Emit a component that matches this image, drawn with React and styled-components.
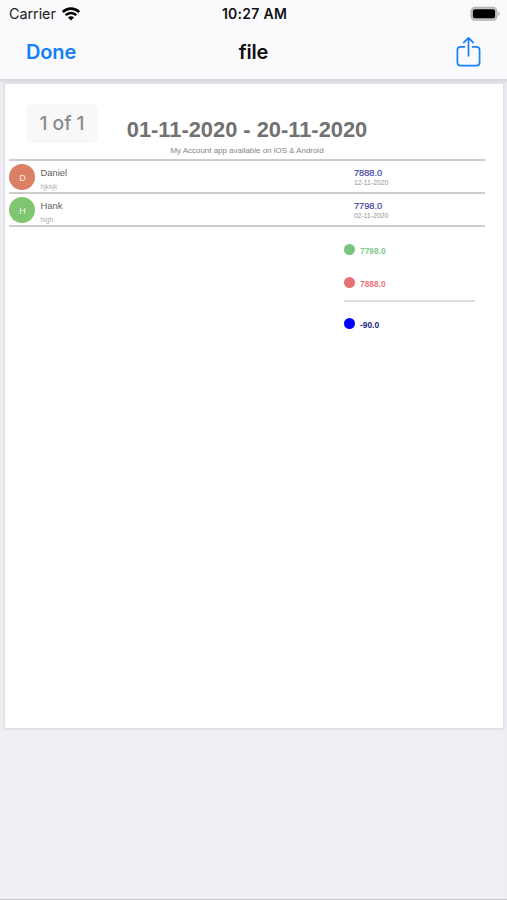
import React from "react";
import styled, { createGlobalStyle } from "styled-components";

const GlobalStyle = createGlobalStyle`
  * { box-sizing: border-box; }
  body { margin: 0; background: #f0eff5; }
`;

const Screen = styled.main`
  display: flex;
  flex-direction: column;
  width: 507px;
  height: 900px;
  overflow: hidden;
  background: #f0eff5;
  border-bottom: 1px solid #c9c9cc;
  font-family: Inter, "Liberation Sans", sans-serif;
`;

const Header = styled.header`
  flex: none;
  height: 79px;
  background: #fafafc;
`;

const StatusBar = styled.div`
  display: grid;
  grid-template-columns: 1fr auto 1fr;
  align-items: center;
  height: 27px;
  padding: 0 7px 0 9px;
  font-size: 14.4px;
  color: #222;
`;

const Carrier = styled.div`
  display: flex;
  align-items: center;
  gap: 6px;
  letter-spacing: -0.05px;
`;

const Clock = styled.time`
  font-weight: 600;
  font-size: 14px;
  letter-spacing: 0.27px;
  color: #111;
`;

const BatterySlot = styled.div`
  display: flex;
  justify-content: flex-end;
`;

const NavBar = styled.nav`
  display: grid;
  grid-template-columns: 1fr auto 1fr;
  align-items: center;
  height: 49px;
  padding: 0 26px;
`;

const DoneButton = styled.button`
  justify-self: start;
  padding: 0;
  border: 0;
  background: none;
  font: 600 20px/24px Inter, sans-serif;
  letter-spacing: -0.15px;
  color: #157efb;
`;

const FileName = styled.h1`
  margin: 0;
  font-size: 20px;
  line-height: 24px;
  font-weight: 600;
  letter-spacing: -0.2px;
  color: #111;
`;

const ShareButton = styled.button`
  justify-self: end;
  display: flex;
  padding: 0;
  border: 0;
  background: none;
`;

const Viewer = styled.div`
  flex: 1;
  padding: 5px 4px 0 5px;
  box-shadow: inset 0 4px 2px -1px #dadade;
`;

const Page = styled.article`
  position: relative;
  height: 644px;
  padding: 33px 18px 0 4px;
  background: #fff;
  box-shadow: 0 0 3px 1px #d6d6da;
  font-family: "Liberation Sans", Arial, sans-serif;
`;

const PageBadge = styled.div`
  position: absolute;
  left: 21px;
  top: 20px;
  width: 72px;
  height: 39px;
  border-radius: 6px;
  background: #f8f8f8;
  font: 500 19.3px/38px Inter, sans-serif;
  text-align: center;
  color: #8b8b8b;
`;

const ReportTitle = styled.h2`
  margin: 0;
  font-size: 21.85px;
  line-height: 26px;
  font-weight: 700;
  text-align: center;
  white-space: nowrap;
  color: #717171;
`;

const Tagline = styled.p`
  margin: 0;
  height: 16px;
  font-size: 7.95px;
  line-height: 15px;
  text-align: center;
  color: #858585;
`;

const Records = styled.section`
  border-top: 2px solid #cdcdcd;
`;

const RecordRow = styled.div`
  display: grid;
  grid-template-columns: 31.5px 313.5px 1fr;
  height: 33px;
  padding-top: 2.5px;
  border-bottom: 2px solid #cdcdcd;
`;

const Avatar = styled.div`
  width: 26px;
  height: 26px;
  margin-left: 0.4px;
  border-radius: 50%;
  background: ${(p) => p.$color};
  font-size: 9px;
  line-height: 28px;
  text-align: center;
  color: #ffffffe0;
`;

const Cell = styled.div`
  display: flex;
  flex-direction: column;
  padding-top: 3.5px;
`;

const Name = styled.span`
  height: 14px;
  font-size: 9.4px;
  line-height: 12px;
  color: #606060;
`;

const Note = styled.span`
  font-size: 6.8px;
  line-height: 11px;
  color: #b0b0b0;
`;

const Amount = styled.span`
  font-size: 9.2px;
  line-height: 12px;
  color: #4043aa;
  -webkit-text-stroke: 0.2px #4043aa;
`;

const RecordDate = styled.span`
  font-size: 6.8px;
  line-height: 8px;
  color: #929292;
`;

const Totals = styled.section`
  width: 131px;
  margin: 6px 0 0 335px;
`;

const TotalRow = styled.div`
  display: flex;
  align-items: center;
  gap: 5px;
  height: 33px;
  font-size: 8.4px;
  font-weight: 700;
  color: ${(p) => p.$color};
`;

const Dot = styled.i`
  width: 11px;
  height: 11px;
  border-radius: 50%;
  background: ${(p) => p.$color};
`;

const TotalValue = styled.span`
  padding-top: 2px;
`;

const TotalRule = styled.hr`
  height: 2px;
  margin: 1px 0 5px;
  border: 0;
  background: #dedede;
`;

const WifiIcon = () => (
  <svg width="18" height="14" viewBox="0 0 18 14" fill="none" stroke="#000" strokeWidth="2.6">
    <path d="M.8 5.1C5.4.5 12.6.5 17.2 5.1" />
    <path d="M3.7 8.1c3-2.9 7.6-2.9 10.6 0" />
    <path d="M6 10.4c1.7-1.6 4.3-1.6 6 0L9 13.6z" fill="#000" stroke="none" />
  </svg>
);

const BatteryIcon = () => (
  <svg width="30" height="16" viewBox="0 0 30 16">
    <rect x="1" y="1.4" width="26" height="12.8" rx="4" fill="#c6c6c6" stroke="#b5b5b5" strokeWidth="1.2" />
    <rect x="2.9" y="3.3" width="22.2" height="9" rx="2" />
    <path d="M28.3 5.6c1.8.8 1.8 3.7 0 4.5z" fill="#aaa" />
  </svg>
);

const ShareIcon = () => (
  <svg width="25" height="32" viewBox="0 0 25 32" fill="none" stroke="#197ffa" strokeWidth="1.7" strokeLinecap="round" strokeLinejoin="round">
    <path d="M8.4 10.8H4.6A3.2 3.2 0 0 0 1.4 14v12.5a3.2 3.2 0 0 0 3.2 3.2h15.8a3.2 3.2 0 0 0 3.2-3.2V14a3.2 3.2 0 0 0-3.2-3.2h-3.8M12.5 19.8V2M7.7 6.7l4.8-4.9 4.8 4.9" />
  </svg>
);

const records = [
  { name: "Daniel", note: "hjkkjk", amount: "7888.0", date: "12-11-2020", color: "#db7f65" },
  { name: "Hank", note: "high", amount: "7798.0", date: "02-11-2020", color: "#80c56f" },
];

export default function App() {
  return (
    <Screen>
      <GlobalStyle />
      <Header>
        <StatusBar>
          <Carrier>Carrier <WifiIcon /></Carrier>
          <Clock>10:27 AM</Clock>
          <BatterySlot><BatteryIcon /></BatterySlot>
        </StatusBar>
        <NavBar>
          <DoneButton>Done</DoneButton>
          <FileName>file</FileName>
          <ShareButton aria-label="Share"><ShareIcon /></ShareButton>
        </NavBar>
      </Header>
      <Viewer>
        <Page>
          <PageBadge>1 of 1</PageBadge>
          <ReportTitle>01-11-2020 - 20-11-2020</ReportTitle>
          <Tagline>My Account app available on iOS &amp; Android</Tagline>
          <Records>
            {records.map((r) => (
              <RecordRow key={r.name}>
                <Avatar $color={r.color}>{r.name[0]}</Avatar>
                <Cell>
                  <Name>{r.name}</Name>
                  <Note>{r.note}</Note>
                </Cell>
                <Cell>
                  <Amount>{r.amount}</Amount>
                  <RecordDate>{r.date}</RecordDate>
                </Cell>
              </RecordRow>
            ))}
          </Records>
          <Totals>
            <TotalRow $color="#80ca8a"><Dot $color="#79c580" /><TotalValue>7798.0</TotalValue></TotalRow>
            <TotalRow $color="#ee7777"><Dot $color="#e57373" /><TotalValue>7888.0</TotalValue></TotalRow>
            <TotalRule />
            <TotalRow $color="#20267f"><Dot $color="#0000fb" /><TotalValue>-90.0</TotalValue></TotalRow>
          </Totals>
        </Page>
      </Viewer>
    </Screen>
  );
}
